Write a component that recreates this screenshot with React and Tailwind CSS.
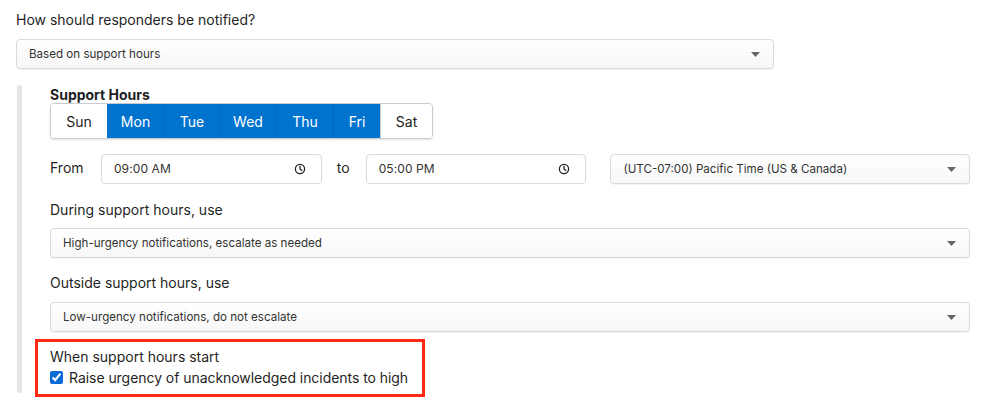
import React from "react";

const days = [
  { label: "Sun", on: false, w: "w-[56px]" },
  { label: "Mon", on: true, w: "w-[57px]" },
  { label: "Tue", on: true, w: "w-[55px]" },
  { label: "Wed", on: true, w: "w-[57px]" },
  { label: "Thu", on: true, w: "w-[57px]" },
  { label: "Fri", on: true, w: "w-[47px]" },
  { label: "Sat", on: false, w: "w-[52px]" },
];

function Caret() {
  return (
    <svg width="9" height="5" viewBox="0 0 9 5" aria-hidden="true">
      <path d="M0 0h9L4.5 5z" fill="#666" />
    </svg>
  );
}

function Clock() {
  return (
    <svg width="12" height="12" viewBox="0 0 12 12" fill="none" aria-hidden="true">
      <circle cx="6" cy="6" r="4.6" stroke="#222" strokeWidth="1.3" />
      <path d="M6 3.4V6l1.8 1.6" stroke="#222" strokeWidth="1.3" strokeLinecap="round" />
    </svg>
  );
}

function Select({ value, className = "" }) {
  return (
    <div
      className={`flex h-[30px] items-center justify-between rounded-[4px] border border-[#d6d9de] bg-gradient-to-b from-white to-[#f7f7f7] pl-3 pr-[13px] pt-px text-[11.6px] text-[#333] shadow-[0_1px_1px_rgba(0,0,0,0.05)] ${className}`}
    >
      <span>{value}</span>
      <Caret />
    </div>
  );
}

function TimeInput({ value }) {
  return (
    <div className="flex h-[30px] w-[221px] items-center justify-between rounded-[4px] border border-[#d6d9de] bg-white pl-3 pr-[15px] text-[12px] tracking-[0.1px] text-[#333]">
      <span>{value}</span>
      <Clock />
    </div>
  );
}

export default function App() {
  return (
    <div className="min-h-[409px] bg-white pl-4 pt-[10px] font-['Inter',sans-serif] text-[14px] text-[#1f1f1f]">
      <p className="leading-5">How should responders be notified?</p>
      <Select value="Based on support hours" className="mt-[9px] w-[758px]" />

      <div className="mt-4 flex">
        <div className="mb-1 ml-px w-[5px] shrink-0 rounded-full bg-[#e6e6e6]" />

        <div className="ml-[28px] w-[920px]">
          <p className="pt-[2px] text-[14px] font-bold leading-4">Support Hours</p>
          <div className="flex h-9 w-fit overflow-hidden rounded-[4px] border border-[#c9ccd1] shadow-[0_1px_2px_rgba(0,0,0,0.12)]">
            {days.map((d, i) => (
              <div
                key={d.label}
                className={`flex items-center justify-center ${d.w} ${
                  d.on ? "bg-[#0073cf] text-white" : "bg-white text-[#222]"
                } ${i > 1 && d.on ? "border-l border-[#0066b8]" : ""} ${
                  d.label === "Sat" ? "border-l border-[#c9ccd1]" : ""
                }`}
              >
                {d.label}
              </div>
            ))}
          </div>

          <div className="mt-[15px] flex items-start">
            <span className="mt-[4px] w-[51px] leading-5">From</span>
            <TimeInput value="09:00 AM" />
            <span className="mt-[4px] w-[44px] pl-[15px] leading-5">to</span>
            <TimeInput value="05:00 PM" />
            <Select
              value="(UTC-07:00) Pacific Time (US & Canada)"
              className="ml-[24px] w-[360px]"
            />
          </div>

          <p className="mt-4 leading-5">During support hours, use</p>
          <Select value="High-urgency notifications, escalate as needed" className="mt-2 w-full" />

          <p className="mt-[15px] leading-5">Outside support hours, use</p>
          <Select value="Low-urgency notifications, do not escalate" className="mt-[9px] w-full" />

          <div className="-ml-[15px] mt-[7px] w-fit border-[3px] border-[#ff2a12] pb-[7px] pl-3 pr-[14px] pt-[5px]">
            <p className="leading-5">When support hours start</p>
            <label className="flex h-5 items-center">
              <input
                type="checkbox"
                defaultChecked
                className="m-0 h-[13px] w-[13px] accent-[#0a6ad8]"
              />
              <span className="ml-[6px] tracking-[-0.05px]">Raise urgency of unacknowledged incidents to high</span>
            </label>
          </div>
        </div>
      </div>
    </div>
  );
}
